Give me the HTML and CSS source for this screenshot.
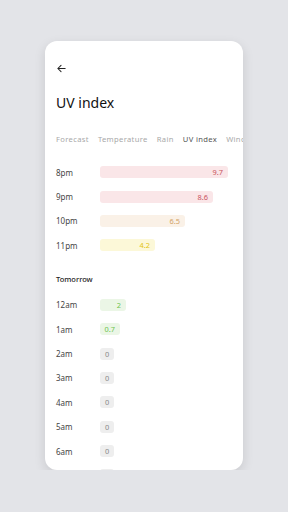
FILE: index.html
```html
<!DOCTYPE html>
<html lang="en">
<head>
    <meta charset="UTF-8">
    <meta name="viewport" content="width=device-width, initial-scale=1.0">
    <title>UV index</title>
    <link rel="stylesheet" href="styles.css">
</head>
<body>
    <div class="card">
        <div class="top-bar">
            <svg class="back" width="11" height="11" viewBox="0 0 24 24">
                <path d="M20 12H4M11 5l-7 7 7 7" fill="none" stroke="#222" stroke-width="2.2" stroke-linecap="round" stroke-linejoin="round"/>
            </svg>
        </div>

        <h1>UV index</h1>

        <!-- Tabs -->
        <div class="tabs">
            <span class="tab">Forecast</span>
            <span class="tab">Temperature</span>
            <span class="tab">Rain</span>
            <span class="tab active">UV index</span>
            <span class="tab">Wind</span>
        </div>

        <div class="rows today">
            <div class="row"><span class="time">8pm</span><span class="bar red" style="width: 128px">9.7</span></div>
            <div class="row"><span class="time">9pm</span><span class="bar red" style="width: 113px">8.6</span></div>
            <div class="row"><span class="time">10pm</span><span class="bar orange" style="width: 85px">6.5</span></div>
            <div class="row"><span class="time">11pm</span><span class="bar yellow" style="width: 55px">4.2</span></div>
        </div>

        <div class="day">Tomorrow</div>

        <div class="rows">
            <div class="row"><span class="time">12am</span><span class="bar green" style="width: 26px">2</span></div>
            <div class="row"><span class="time">1am</span><span class="bar green" style="width: 20px">0.7</span></div>
            <div class="row"><span class="time">2am</span><span class="bar grey">0</span></div>
            <div class="row"><span class="time">3am</span><span class="bar grey">0</span></div>
            <div class="row"><span class="time">4am</span><span class="bar grey">0</span></div>
            <div class="row"><span class="time">5am</span><span class="bar grey">0</span></div>
            <div class="row"><span class="time">6am</span><span class="bar grey">0</span></div>
            <div class="row"><span class="time">7am</span><span class="bar grey">0</span></div>
        </div>
    </div>
</body>
</html>
```

FILE: styles.css
```css
body {
    margin: 0;
    background: #e3e4e8;
    font-family: 'Noto Sans', 'Open Sans', sans-serif;
}

.card {
    margin: 41px 0 0 45px;
    width: 198px;
    height: 429px;
    background: white;
    border-radius: 12px;
    box-shadow: 0 4px 12px rgba(0, 0, 0, 0.12);
    overflow: hidden;
    padding-left: 11px;
    box-sizing: border-box;
}

.top-bar {
    padding-top: 22px;
    height: 11px;
}

.back {
    display: block;
}

h1 {
    margin: 19px 0 0 0;
    font-size: 14px;
    font-weight: 400;
    color: #111;
    line-height: 20px;
}

.tabs {
    display: flex;
    gap: 9px;
    margin-top: 20px;
    white-space: nowrap;
    font-size: 7.6px;
    letter-spacing: 0.35px;
    line-height: 12px;
}

.tab {
    color: #a8a8a8;
}

.tab.active {
    color: #555;
}

.rows {
    margin-top: 8px;
}

.rows.today {
    margin-top: 15px;
}

.row {
    display: flex;
    align-items: center;
    height: 24.4px;
}

.time {
    width: 44px;
    font-size: 8px;
    color: #444;
}

.bar {
    height: 12px;
    min-width: 14px;
    box-sizing: border-box;
    border-radius: 3px;
    font-size: 7.4px;
    line-height: 12px;
    text-align: right;
    padding-right: 5px;
}

.bar.grey {
    width: 14px;
    text-align: center;
    padding-right: 0;
    background: #eeeeee;
    color: #888;
}

.red {
    background: #fae6e8;
    color: #c9525d;
}

.orange {
    background: #faf1e7;
    color: #d2a266;
}

.yellow {
    background: #fcf8d8;
    color: #e2c410;
}

.green {
    background: #ebf6e6;
    color: #6cc44e;
}

.day {
    margin-top: 15px;
    font-size: 7.5px;
    font-weight: 500;
    color: #222;
    line-height: 12px;
}
```
